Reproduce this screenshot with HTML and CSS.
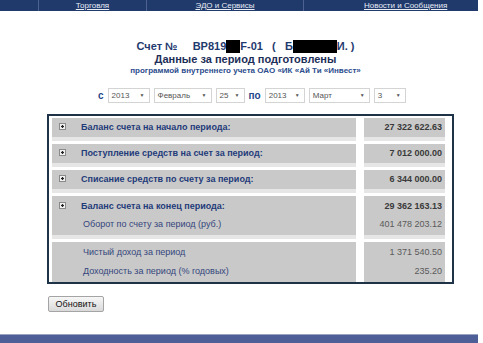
FILE: index.html
```html
<!DOCTYPE html>
<html lang="ru">
<head>
  <meta charset="UTF-8">
  <title>Данные за период</title>
  <link rel="stylesheet" href="styles.css">
</head>
<body>
  <div class="topnav">
    <span class="nav-cell nav-first"></span>
    <span class="nav-cell nav-trade"><a href="#">Торговля</a></span>
    <span class="nav-cell nav-edo"><a href="#">ЭДО и Сервисы</a></span>
    <span class="nav-cell nav-news"><a href="#">Новости и Сообщения</a></span>
  </div>

  <div class="content">
    <h1 class="account-title">Счет №&nbsp;&nbsp;&nbsp;&nbsp; BP819<span class="mask mask-short"></span>F-01&nbsp;&nbsp; (&nbsp;&nbsp; Б<span class="mask mask-long"></span>И. )</h1>
    <h2 class="period-title">Данные за период подготовлены</h2>
    <p class="period-source">программой внутреннего учета ОАО «ИК «Ай Ти «Инвест»</p>

    <div class="period-form">
      <span class="form-word">с</span>
      <span class="select sel-year">2013</span>
      <span class="select sel-month">Февраль</span>
      <span class="select sel-day">25</span>
      <span class="form-word">по</span>
      <span class="select sel-year2">2013</span>
      <span class="select sel-month2">Март</span>
      <span class="select sel-day2">3</span>
    </div>
  </div>

  <div class="panel">
    <div class="panel-row">
      <div class="cell label-cell"><span class="expand"></span>Баланс счета на начало периода:</div>
      <div class="cell value-cell">27 322 622.63</div>
    </div>
    <div class="panel-row">
      <div class="cell label-cell"><span class="expand"></span>Поступление средств на счет за период:</div>
      <div class="cell value-cell">7 012 000.00</div>
    </div>
    <div class="panel-row">
      <div class="cell label-cell"><span class="expand"></span>Списание средств по счету за период:</div>
      <div class="cell value-cell">6 344 000.00</div>
    </div>
    <div class="panel-row group">
      <div class="cell label-cell">
        <div class="line"><span class="expand"></span>Баланс счета на конец периода:</div>
        <div class="line sub">Оборот по счету за период (руб.)</div>
      </div>
      <div class="cell value-cell">
        <div class="line">29 362 163.13</div>
        <div class="line sub">401 478 203.12</div>
      </div>
    </div>
    <div class="panel-row group last">
      <div class="cell label-cell">
        <div class="line sub">Чистый доход за период</div>
        <div class="line sub">Доходность за период (% годовых)</div>
      </div>
      <div class="cell value-cell">
        <div class="line sub">1 371 540.50</div>
        <div class="line sub">235.20</div>
      </div>
    </div>
  </div>

  <div class="actions">
    <button class="refresh">Обновить</button>
  </div>

  <div class="footer-bar"></div>
</body>
</html>
```

FILE: styles.css
```css
body {
  margin: 0;
  font-family: "Liberation Sans", Arial, sans-serif;
  background-color: #fff;
  color: #333;
}

.topnav {
  display: flex;
  width: 478px;
  height: 11px;
  background-color: #1f3a6b;
  overflow: hidden;
}
.nav-cell {
  height: 11px;
  font-size: 8px;
  line-height: 11px;
  text-align: center;
  border-right: 1px solid #4d6290;
  box-sizing: border-box;
}
.nav-cell a {
  color: #e8ecf6;
  text-decoration: underline;
}
.nav-first { width: 39px; }
.nav-trade { width: 108px; }
.nav-edo { width: 157px; }
.nav-news {
  width: 174px;
  border-right: none;
  text-align: left;
  padding-left: 60px;
}

.content {
  width: 483px;
  padding-left: 8px;
  box-sizing: border-box;
  text-align: center;
}
.account-title {
  margin: 29px 0 0;
  font-size: 11px;
  line-height: 13px;
  color: #1f3a6e;
  white-space: nowrap;
}
.mask {
  display: inline-block;
  height: 13px;
  vertical-align: -3px;
  background-color: #000;
}
.mask-short { width: 14px; }
.mask-long { width: 44px; }
.period-title {
  margin: 0;
  font-size: 11px;
  line-height: 13px;
  color: #1c2e58;
}
.period-source {
  margin: 0;
  font-size: 8px;
  line-height: 10px;
  font-weight: bold;
  color: #2b4c8c;
}

.period-form {
  display: flex;
  align-items: center;
  gap: 4px;
  margin-top: 12px;
  padding-left: 90px;
  height: 15px;
}
.form-word {
  font-size: 10px;
  font-weight: bold;
  color: #24478a;
}
.select {
  position: relative;
  height: 15px;
  box-sizing: border-box;
  border: 1px solid #d4d4d4;
  font-size: 8px;
  line-height: 13px;
  color: #555;
  text-align: left;
  padding-left: 3px;
}
.select::after {
  content: "▼";
  position: absolute;
  right: 4px;
  top: 0;
  font-size: 5px;
  color: #555;
}
.sel-year { width: 42px; }
.sel-month { width: 58px; }
.sel-day { width: 29px; }
.sel-year2 { width: 40px; }
.sel-month2 { width: 61px; }
.sel-day2 { width: 32px; }

.panel {
  width: 407px;
  margin: 11px 0 0 47px;
  box-sizing: border-box;
  border: 2px solid #1e3347;
  padding: 2px 7px 0 3px;
  background-color: #fff;
}
.panel-row {
  display: grid;
  grid-template-columns: 304px 81px;
  gap: 8px;
  margin-bottom: 3px;
}
.cell {
  height: 19px;
  background-color: #c9c9c9;
  border-bottom: 4px solid #e6e6e6;
  font-size: 9px;
  line-height: 19px;
  white-space: nowrap;
}
.label-cell {
  font-weight: bold;
  color: #1f3b7a;
}
.value-cell {
  text-align: right;
  padding-right: 3px;
  font-weight: bold;
  color: #3a3a3a;
}
.expand {
  display: inline-block;
  width: 5px;
  height: 5px;
  margin: 0 15px 0 7px;
  border: 1px solid #8a8a8a;
  background: #f2f2f2 radial-gradient(circle, #222 0 1px, transparent 1.5px);
  vertical-align: 0;
}
.group .cell {
  height: 38px;
  padding-top: 1px;
  line-height: 18px;
  box-sizing: content-box;
}
.group.last {
  margin-bottom: 0;
}
.group.last .cell {
  height: 38px;
  line-height: 19px;
  border-bottom: 1px solid #c9c9c9;
}
.line.sub {
  font-weight: normal;
}
.label-cell .line.sub {
  padding-left: 31px;
  color: #34467c;
}
.value-cell .line.sub {
  color: #5a5a5a;
}

.actions {
  margin: 12px 0 0 48px;
}
.refresh {
  display: block;
  width: 56px;
  height: 16px;
  padding: 0;
  font-family: "Liberation Sans", Arial, sans-serif;
  font-size: 9px;
  color: #111;
  border: 1px solid #a4a4a4;
  border-radius: 2px;
  background: linear-gradient(#f7f7f7, #d9d9d9);
}

.footer-bar {
  width: 478px;
  height: 11px;
  margin-top: 22px;
  background-color: #4e5e96;
  border-top: 1px solid #9aa3c4;
}
```
